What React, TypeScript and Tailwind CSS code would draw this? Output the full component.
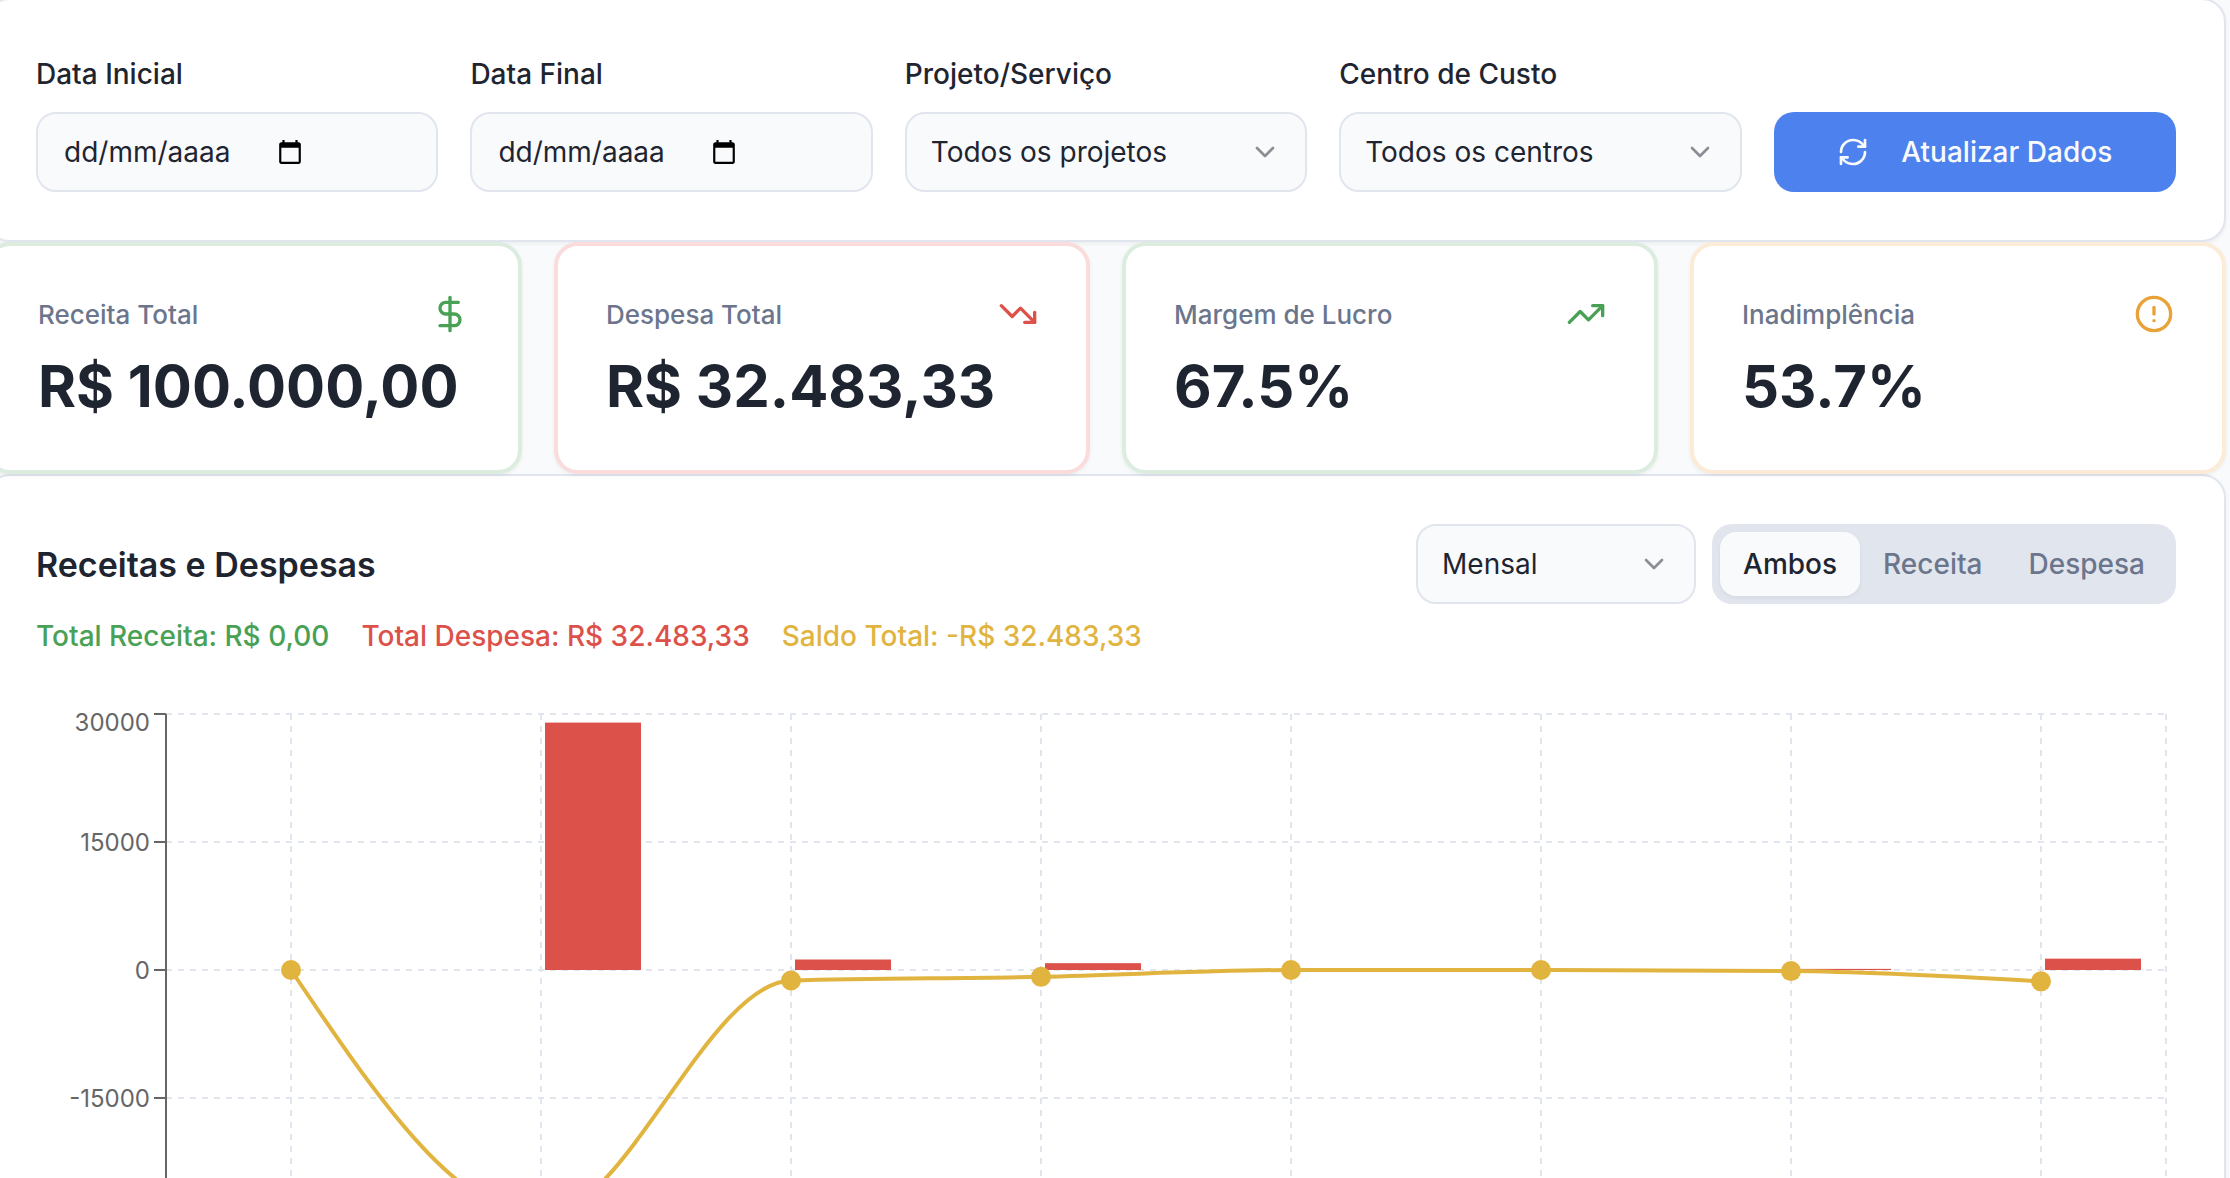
import React, { useState } from 'react';
import {
  ChevronDown,
  CircleAlert,
  DollarSign,
  RefreshCw,
  TrendingDown,
  TrendingUp,
} from 'lucide-react';

const months = [
  { receita: 0, despesa: 0 },
  { receita: 0, despesa: 28993 },
  { receita: 0, despesa: 1230 },
  { receita: 0, despesa: 800 },
  { receita: 0, despesa: 0 },
  { receita: 0, despesa: 0 },
  { receita: 0, despesa: 130 },
  { receita: 0, despesa: 1330 },
];

const stats = [
  { title: 'Receita Total', value: 'R$ 100.000,00', icon: DollarSign, border: 'border-[#dcecdf]', color: 'text-[#49a156]' },
  { title: 'Despesa Total', value: 'R$ 32.483,33', icon: TrendingDown, border: 'border-[#f9dcdb]', color: 'text-[#dc524b]' },
  { title: 'Margem de Lucro', value: '67.5%', icon: TrendingUp, border: 'border-[#dcecdf]', color: 'text-[#49a156]' },
  { title: 'Inadimplência', value: '53.7%', icon: CircleAlert, border: 'border-[#fcebd7]', color: 'text-[#e8a237]' },
];

const CalendarIcon = () => (
  <svg viewBox="0 0 24 24" className="h-[26px] w-[26px]" fill="currentColor" aria-hidden="true">
    <path d="M20 3h-1V1h-2v2H7V1H5v2H4c-1.1 0-2 .9-2 2v16c0 1.1.9 2 2 2h16c1.1 0 2-.9 2-2V5c0-1.1-.9-2-2-2zm0 18H4V8h16v13z" />
  </svg>
);

const DateField = ({ id, label }: { id: string; label: string }) => {
  const [value, setValue] = useState('');

  return (
    <div>
      <label htmlFor={id} className="flex h-12 items-center pt-1 text-[28px] font-medium">
        {label}
      </label>
      <div className="mt-4 flex h-20 items-center rounded-[20px] border-2 border-[#e1e5ee] bg-[#f9fafc] px-6">
        <input
          id={id}
          type="text"
          placeholder="dd/mm/aaaa"
          value={value}
          onChange={(e) => setValue(e.target.value)}
          className="w-[215px] bg-transparent pl-[2px] text-[28px] outline-none placeholder:text-[#1f2530]"
        />
        <button type="button" aria-label={`Abrir calendário: ${label}`} className="text-black">
          <CalendarIcon />
        </button>
      </div>
    </div>
  );
};

const SelectBox = ({ id, label, options }: { id: string; label: string; options: string[] }) => (
  <div className="relative">
    <select
      id={id}
      aria-label={label}
      className="h-20 w-full appearance-none rounded-[20px] border-2 border-[#e1e5ee] bg-[#f9fafc] px-6 text-[28px] outline-none"
    >
      {options.map((option) => (
        <option key={option}>{option}</option>
      ))}
    </select>
    <ChevronDown className="pointer-events-none absolute top-6 right-[26px] h-8 w-8 opacity-50" />
  </div>
);

const SelectField = ({ id, label, options }: { id: string; label: string; options: string[] }) => (
  <div>
    <label htmlFor={id} className="mb-4 flex h-12 items-center pt-1 text-[28px] font-medium">
      {label}
    </label>
    <SelectBox id={id} label={label} options={options} />
  </div>
);

// Chart geometry
const LEFT = 130;
const TOP = 10;
const STEP = 250;
const RIGHT = LEFT + STEP * months.length;
const BOTTOM = TOP + 512;
const yFor = (value: number) => TOP + ((30000 - value) / 15000) * 128;
const xFor = (index: number) => LEFT + STEP / 2 + STEP * index;

// Monotone cubic path, so the line never overshoots a point
const monotonePath = (points: { x: number; y: number }[]) => {
  const n = points.length;
  const slopes = points.slice(1).map((p, i) => (p.y - points[i].y) / (p.x - points[i].x));
  const tangents = points.map((_, i) => {
    if (i === 0 || i === n - 1) return 0;
    const a = slopes[i - 1];
    const b = slopes[i];
    if (a * b <= 0) return 0;
    return Math.sign(a) * 2 * Math.min(Math.abs(a), Math.abs(b), Math.abs(a + b) / 4);
  });
  tangents[0] = (3 * slopes[0] - tangents[1]) / 2;
  tangents[n - 1] = (3 * slopes[n - 2] - tangents[n - 2]) / 2;

  return points.slice(1).reduce((path, p, i) => {
    const prev = points[i];
    const dx = (p.x - prev.x) / 3;
    return `${path}C${prev.x + dx},${prev.y + dx * tangents[i]} ${p.x - dx},${p.y - dx * tangents[i + 1]} ${p.x},${p.y}`;
  }, `M${points[0].x},${points[0].y}`);
};

const Chart = () => {
  const ticks = [30000, 15000, 0, -15000];
  const points = months.map((m, i) => ({ x: xFor(i), y: yFor(m.receita - m.despesa) }));

  return (
    <svg viewBox="0 0 2140 600" className="block h-auto w-full" role="img" aria-label="Receitas e despesas por mês">
      <g stroke="#e1e5ee" strokeWidth="2" strokeDasharray="6 6">
        {ticks.map((t) => (
          <line key={t} x1={LEFT} x2={RIGHT} y1={yFor(t)} y2={yFor(t)} />
        ))}
        {months.map((_, i) => (
          <line key={i} x1={xFor(i)} x2={xFor(i)} y1={TOP} y2={BOTTOM} />
        ))}
        <line x1={RIGHT} x2={RIGHT} y1={TOP} y2={BOTTOM} />
        <line x1={LEFT} x2={RIGHT} y1={BOTTOM} y2={BOTTOM} />
      </g>
      <g stroke="#666666" strokeWidth="2">
        <line x1={LEFT} x2={LEFT} y1={TOP} y2={BOTTOM} />
        {ticks.map((t) => (
          <line key={t} x1={LEFT - 12} x2={LEFT} y1={yFor(t)} y2={yFor(t)} />
        ))}
      </g>
      <g fill="#666666" fontSize="24" textAnchor="end">
        {ticks.map((t, i) => (
          <text key={t} x={LEFT - 16} y={yFor(t) + (i === 0 ? 17 : 9)}>
            {t}
          </text>
        ))}
      </g>
      {months.map((m, i) =>
        m.despesa > 0 ? (
          <rect key={i} x={xFor(i) + 4} y={yFor(m.despesa)} width="96" height={yFor(0) - yFor(m.despesa)} fill="#dc524b" />
        ) : null
      )}
      <path d={monotonePath(points)} fill="none" stroke="#e1b43f" strokeWidth="4" />
      {points.map((p) => (
        <circle key={p.x} cx={p.x} cy={p.y} r="10" fill="#e1b43f" />
      ))}
    </svg>
  );
};

const App = () => {
  const [tab, setTab] = useState('Ambos');

  return (
    <div className="h-screen overflow-hidden bg-[#f8fafc] font-['Inter',sans-serif] text-[#1f2530]">
      <main className="-mt-[2px] mr-1 -ml-[14px]">
        <form
          onSubmit={(e) => e.preventDefault()}
          className="grid grid-cols-5 items-end gap-8 rounded-3xl border-2 border-[#e1e5ee] bg-white p-12 shadow-[0_2px_4px_rgba(0,0,0,0.05)]"
        >
          <DateField id="data-inicial" label="Data Inicial" />
          <DateField id="data-final" label="Data Final" />
          <SelectField id="projeto" label="Projeto/Serviço" options={['Todos os projetos']} />
          <SelectField id="centro" label="Centro de Custo" options={['Todos os centros']} />
          <button
            type="submit"
            className="flex h-20 items-center justify-center gap-8 rounded-[20px] bg-[#4d81ed] text-[28px] font-medium text-[#f9fafc]"
          >
            <RefreshCw className="h-8 w-8" />
            Atualizar Dados
          </button>
        </form>

        <section className="grid grid-cols-4 gap-8">
          {stats.map(({ title, value, icon: Icon, border, color }) => (
            <div key={title} className={`rounded-3xl border-4 bg-white p-12 shadow-[0_2px_4px_rgba(0,0,0,0.05)] ${border}`}>
              <div className="flex h-10 items-center justify-between">
                <h3 className="text-[26px] font-medium text-[#6b768c]">{title}</h3>
                <Icon className={`h-10 w-10 ${color}`} />
              </div>
              <p className="mt-4 text-[58px] leading-[72px] font-bold whitespace-nowrap">{value}</p>
            </div>
          ))}
        </section>

        <section className="rounded-3xl border-2 border-[#e1e5ee] bg-white p-12 shadow-[0_2px_4px_rgba(0,0,0,0.05)]">
          <div className="flex items-center justify-between">
            <h2 className="text-[34px] font-semibold">Receitas e Despesas</h2>
            <div className="flex gap-4">
              <div className="w-[280px]">
                <SelectBox id="periodo" label="Período" options={['Mensal']} />
              </div>
              <div className="flex h-20 rounded-[20px] bg-[#e1e5ee] p-2">
                {['Ambos', 'Receita', 'Despesa'].map((name) => (
                  <button
                    key={name}
                    type="button"
                    onClick={() => setTab(name)}
                    className={
                      tab === name
                        ? 'rounded-2xl bg-[#f9fafc] px-[23px] text-[28px] font-medium shadow-[0_2px_4px_rgba(0,0,0,0.05)]'
                        : 'rounded-2xl px-[23px] text-[28px] font-medium text-[#6b768c]'
                    }
                  >
                    {name}
                  </button>
                ))}
              </div>
            </div>
          </div>
          <div className="mt-3 mb-12 flex gap-8 text-[28px] leading-10 font-medium">
            <span className="text-[#49a156]">Total Receita: R$ 0,00</span>
            <span className="text-[#dc524b]">Total Despesa: R$ 32.483,33</span>
            <span className="text-[#e1b43f]">Saldo Total: -R$ 32.483,33</span>
          </div>
          <Chart />
        </section>
      </main>
    </div>
  );
};

export default App;
